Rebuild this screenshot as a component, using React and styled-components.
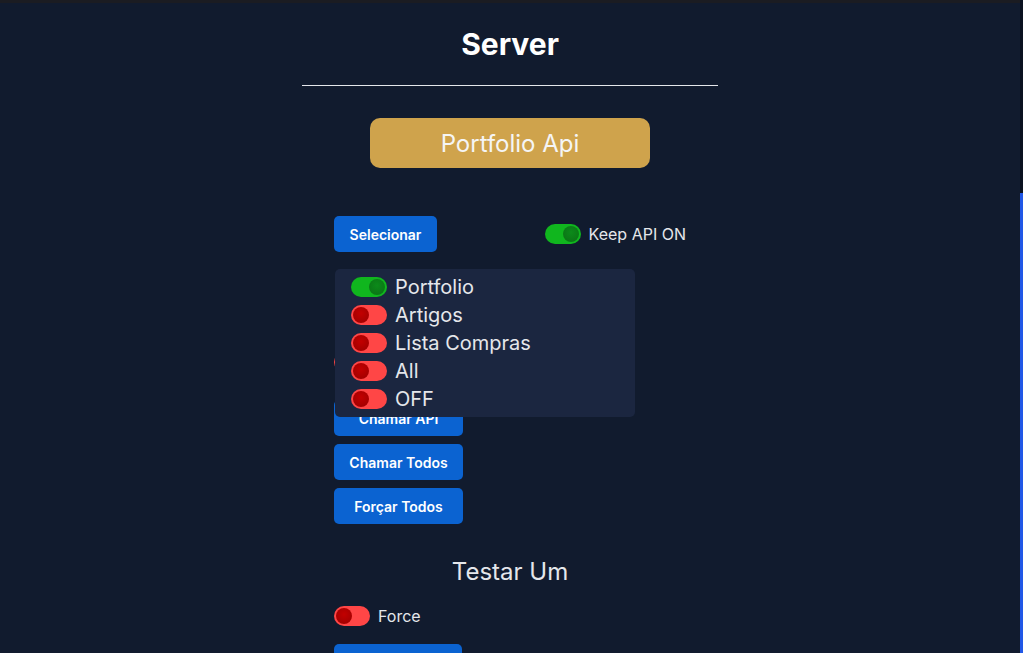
import React from 'react'
import styled, { createGlobalStyle } from 'styled-components';

const GlobalStyle = createGlobalStyle`
    html, body {
        margin: 0;
        padding: 0;
        background-color: #111b2e;
        font-family: Inter, "Noto Sans", sans-serif;
        overflow: hidden;
    }
`;

const Page = styled.div`
    min-height: 653px;
    padding-right: 3px;
    background-color: #111b2e;
    display: flex;
    flex-direction: column;
    align-items: center;
`;

const TopStrip = styled.div`
    align-self: stretch;
    height: 3px;
    margin-right: -3px;
    background-color: #1b1c22;
`;

const ScrollBar = styled.div`
    position: fixed;
    top: 0;
    right: 0;
    width: 3px;
    height: 100vh;
    display: flex;
    flex-direction: column;
`;

const ScrollTrack = styled.div`
    height: 193px;
    background-color: #0b1120;
`;

const ScrollThumb = styled.div`
    flex: 1;
    background-color: #2157e6;
`;

const Title = styled.h1`
    margin: 23px 0 0;
    font-size: 30px;
    line-height: 36px;
    font-weight: 700;
    color: #fff;
`;

const Divider = styled.div`
    margin-top: 23px;
    width: 416px;
    height: 1px;
    background-color: #e5e7eb;
`;

const ApiBadge = styled.div`
    margin-top: 32px;
    width: 280px;
    height: 50px;
    border-radius: 10px;
    background-color: #cfa34c;
    color: #f5f5f5;
    font-size: 24px;
    display: flex;
    justify-content: center;
    align-items: center;
`;

const Panel = styled.div`
    width: 352px;
    margin-top: ${props => props.$top || 0}px;
    display: flex;
    flex-direction: column;
    align-items: flex-start;
    gap: 8px;
`;

const TopRow = styled.div`
    position: relative;
    width: 352px;
    margin-top: 48px;
    display: flex;
    justify-content: space-between;
    align-items: center;
`;

const Button = styled.button`
    width: ${props => props.width || '129px'};
    height: 36px;
    border: none;
    border-radius: 5px;
    background-color: #0b63d1;
    color: #fff;
    font-family: Inter, "Noto Sans", sans-serif;
    font-size: 14px;
    font-weight: 600;
    padding: 0;
    cursor: pointer;
`;

const ToggleRow = styled.label`
    display: flex;
    align-items: center;
    gap: 8px;
    color: #e5e7eb;
    font-size: ${props => props.$big ? '20px' : '16px'};
    height: ${props => props.$big ? '28px' : '20px'};
    margin-top: ${props => props.$top || 0}px;
    margin-bottom: ${props => props.$bottom || 0}px;
`;

const Track = styled.span`
    position: relative;
    width: 36px;
    height: 20px;
    border-radius: 10px;
    flex-shrink: 0;
    background-color: ${props => props.$on ? '#10b61e' : '#ff4646'};
`;

const Knob = styled.span`
    position: absolute;
    top: 2px;
    left: ${props => props.$on ? '18px' : '2px'};
    width: 16px;
    height: 16px;
    border-radius: 50%;
    background: ${props => props.$on
        ? 'radial-gradient(circle at 50% 40%, #0c8a1a, #0a6f14)'
        : 'radial-gradient(circle at 50% 40%, #c20000, #9a0000)'};
`;

const Dropdown = styled.div`
    position: absolute;
    top: 53px;
    left: 1px;
    width: 300px;
    padding: 4px 16px;
    box-sizing: border-box;
    border-radius: 5px;
    background-color: #1b2640;
    z-index: 10;
`;

const SubTitle = styled.h2`
    margin: 33px 0 0;
    font-size: 24px;
    line-height: 30px;
    font-weight: 400;
    color: #e5e7eb;
`;

const Toggle = ({ on, label, big, top, bottom }) => (
    <ToggleRow $big={big} $top={top} $bottom={bottom}>
        <Track $on={on}><Knob $on={on} /></Track>
        {label}
    </ToggleRow>
);

const options = [
    { label: 'Portfolio', on: true },
    { label: 'Artigos', on: false },
    { label: 'Lista Compras', on: false },
    { label: 'All', on: false },
    { label: 'OFF', on: false },
];

export default function App() {
    return (
        <Page>
            <GlobalStyle />
            <TopStrip />
            <Title>Server</Title>
            <Divider />
            <ApiBadge>Portfolio Api</ApiBadge>
            <TopRow>
                <Button width="103px">Selecionar</Button>
                <Toggle on label="Keep API ON" />
                <Dropdown>
                    {options.map(o => (
                        <Toggle key={o.label} on={o.on} label={o.label} big />
                    ))}
                </Dropdown>
            </TopRow>
            <Panel $top={100}>
                <Toggle on={false} bottom={20} />
                <Button>Chamar API</Button>
                <Button>Chamar Todos</Button>
                <Button>Forçar Todos</Button>
            </Panel>
            <SubTitle>Testar Um</SubTitle>
            <Panel $top={19}>
                <Toggle on={false} label="Force" bottom={10} />
                <Button width="128px">Chamar API</Button>
            </Panel>
            <ScrollBar>
                <ScrollTrack />
                <ScrollThumb />
            </ScrollBar>
        </Page>
    )
}
